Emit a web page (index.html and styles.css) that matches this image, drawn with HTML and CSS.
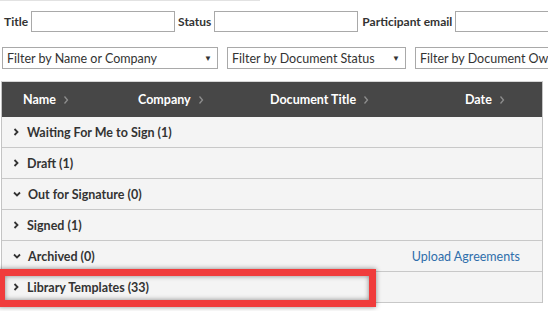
FILE: index.html
```html
<!DOCTYPE html>
<html>
<head>
<meta charset="utf-8">
<link rel="stylesheet" href="styles.css">
</head>
<body>
<div class="page">
  <div class="topline"></div>
  <div class="search">
    <span class="lbl">Title</span><span class="box box-title"></span>
    <span class="lbl">Status</span><span class="box box-status"></span>
    <span class="lbl">Participant email</span><span class="box box-email"></span>
  </div>
  <div class="filters">
    <div class="select s1"><span>Filter by Name or Company</span><span class="arr">&#9660;</span></div>
    <div class="select s2"><span>Filter by Document Status</span><span class="arr">&#9660;</span></div>
    <div class="select s3"><span>Filter by Document Owner</span></div>
  </div>
  <div class="table">
    <div class="thead">
      <div class="th th-name">Name<svg class="sort" viewBox="0 0 6 10"><path d="M1.5 1.5 L4.5 5 L1.5 8.5"/></svg></div>
      <div class="th th-company">Company<svg class="sort" viewBox="0 0 6 10"><path d="M1.5 1.5 L4.5 5 L1.5 8.5"/></svg></div>
      <div class="th th-title">Document Title<svg class="sort" viewBox="0 0 6 10"><path d="M1.5 1.5 L4.5 5 L1.5 8.5"/></svg></div>
      <div class="th th-date">Date<svg class="sort" viewBox="0 0 6 10"><path d="M1.5 1.5 L4.5 5 L1.5 8.5"/></svg></div>
    </div>
    <div class="row"><svg class="chev" viewBox="0 0 6 8"><path d="M1.5 1 L4.5 4 L1.5 7"/></svg><span>Waiting For Me to Sign (1)</span></div>
    <div class="row"><svg class="chev" viewBox="0 0 6 8"><path d="M1.5 1 L4.5 4 L1.5 7"/></svg><span>Draft (1)</span></div>
    <div class="row"><svg class="chev down" viewBox="0 0 8 6"><path d="M1 1.5 L4 4.5 L7 1.5"/></svg><span>Out for Signature (0)</span></div>
    <div class="row"><svg class="chev" viewBox="0 0 6 8"><path d="M1.5 1 L4.5 4 L1.5 7"/></svg><span>Signed (1)</span></div>
    <div class="row"><svg class="chev down" viewBox="0 0 8 6"><path d="M1 1.5 L4 4.5 L7 1.5"/></svg><span>Archived (0)</span><a class="upload">Upload Agreements</a></div>
    <div class="row"><svg class="chev" viewBox="0 0 6 8"><path d="M1.5 1 L4.5 4 L1.5 7"/></svg><span>Library Templates (33)</span></div>
  </div>
  <div class="highlight"></div>
</div>
</body>
</html>
```
FILE: styles.css
```css
html, body {
  margin: 0;
  padding: 0;
  background: #fff;
  overflow: hidden;
}
.page {
  position: relative;
  width: 548px;
  height: 311px;
  overflow: hidden;
  font-family: Lato, "Open Sans", sans-serif;
  color: #333;
}
.topline {
  width: 260px;
  height: 1px;
  background: #e2e2e2;
}
.search {
  display: flex;
  align-items: center;
  white-space: nowrap;
  margin-top: 10px;
  padding-left: 4px;
  height: 21px;
}
.lbl {
  font-weight: 700;
  font-size: 12px;
  color: #333;
  margin-right: 3px;
}
.box {
  display: block;
  flex: none;
  box-sizing: border-box;
  height: 21px;
  border: 1px solid #a9a9a9;
  background: #fff;
  margin-right: 3px;
}
.box-title { width: 144px; }
.box-status { width: 144px; margin-right: 4px; }
.box-email { width: 150px; }
.filters {
  display: flex;
  gap: 9px;
  margin-top: 15px;
  padding-left: 2px;
  white-space: nowrap;
}
.select {
  flex: none;
  box-sizing: border-box;
  height: 22px;
  border: 1px solid #a9a9a9;
  background: #fff;
  display: flex;
  align-items: center;
  justify-content: space-between;
  padding: 0 5px 0 4px;
  font-size: 12.5px;
  color: #333;
  overflow: hidden;
}
.s1 { width: 216px; }
.s2 { width: 179px; }
.s3 { width: 150px; }
.arr {
  font-size: 8px;
  color: #333;
}
.table {
  margin-top: 12px;
  margin-left: 1px;
  width: 542px;
  box-sizing: border-box;
  border-top: 1px solid #d6d6d6;
  border-right: 1px solid #c4c4c4;
  border-left: 1px solid #c4c4c4;
}
.thead {
  height: 35px;
  background: #474747;
  display: grid;
  grid-template-columns: 115px 132px 195px 1fr;
  align-items: center;
  padding-left: 21px;
}
.th {
  display: flex;
  align-items: center;
  color: #fff;
  font-weight: 700;
  font-size: 12.5px;
}
.sort {
  width: 6px;
  height: 10px;
  margin-left: 7px;
  fill: none;
  stroke: #8e8e8e;
  stroke-width: 1.3;
}
.row {
  height: 30px;
  border-bottom: 1px solid #c8c8c8;
  background: #f4f4f4;
  display: flex;
  align-items: center;
  padding-left: 11px;
  font-size: 12.5px;
  font-weight: 700;
  color: #333;
}
.chev {
  width: 6px;
  height: 8px;
  margin-right: 8px;
  fill: none;
  stroke: #333;
  stroke-width: 1.8;
}
.chev.down {
  width: 8px;
  height: 6px;
  margin-right: 7px;
}
.upload {
  margin-left: auto;
  margin-right: 22px;
  color: #2f6eab;
  font-weight: 400;
}
.highlight {
  position: absolute;
  left: -2px;
  top: 269px;
  width: 378px;
  height: 38px;
  box-sizing: border-box;
  border: 7px solid #f03c3c;
  box-shadow: 0 0 5px rgba(0,0,0,0.45), inset 0 0 5px rgba(0,0,0,0.45);
}
```
